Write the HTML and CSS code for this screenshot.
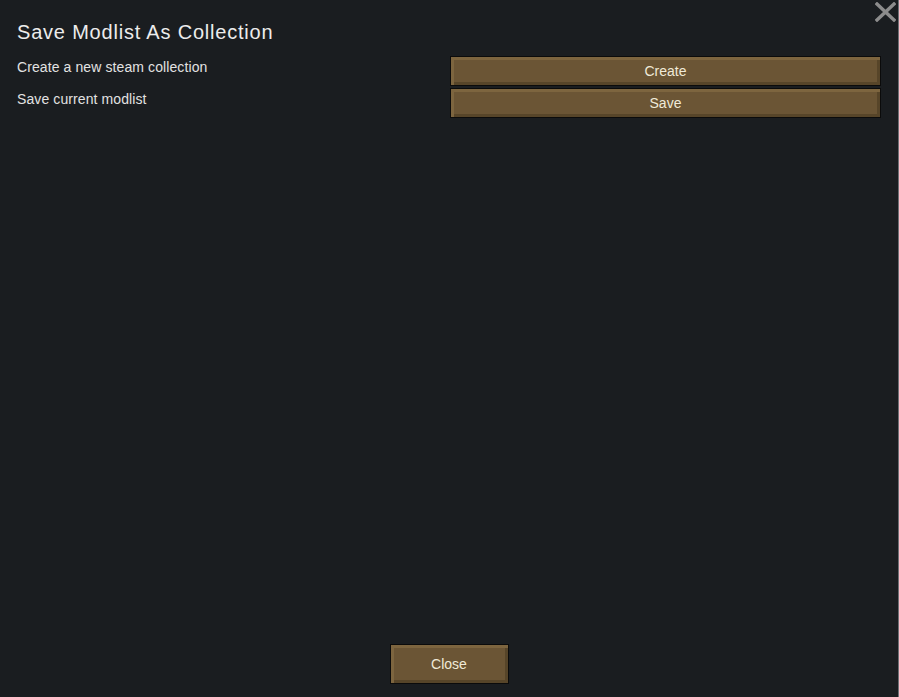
FILE: index.html
```html
<!DOCTYPE html>
<html lang="en">
<head>
    <meta charset="UTF-8">
    <meta name="viewport" content="width=device-width, initial-scale=1.0">
    <title>Save Modlist As Collection</title>
    <link rel="stylesheet" href="styles.css">
</head>
<body>
    <div id="dialog">
        <button class="close-x" title="Close">
            <svg width="21" height="20" viewBox="0 0 21 20">
                <path d="M2 2 L19 18 M19 2 L2 18" stroke="#8c8c8c" stroke-width="3.4" stroke-linecap="square"/>
            </svg>
        </button>
        <h1 class="title">Save Modlist As Collection</h1>
        <div class="rows">
            <div class="row">
                <span class="label">Create a new steam collection</span>
                <button class="btn wide">Create</button>
            </div>
            <div class="row">
                <span class="label">Save current modlist</span>
                <button class="btn wide">Save</button>
            </div>
        </div>
        <div class="footer">
            <button class="btn close">Close</button>
        </div>
    </div>
</body>
</html>
```

FILE: styles.css
```css
*{
    margin: 0;
    padding: 0;
    box-sizing: border-box;
}
html, body{
    width: 100%;
    height: 100%;
    background-color: #1a1d20;
    overflow: hidden;
}
#dialog{
    position: relative;
    height: 697px;
    display: flex;
    flex-direction: column;
    padding: 18px 17px 13px 17px;
    border-right: 1px solid #6d7075;
    font-family: "Liberation Sans", Arial, sans-serif;
    color: #e6e6e6;
}
.close-x{
    position: absolute;
    top: 2px;
    right: 2px;
    width: 21px;
    height: 20px;
    border: none;
    background: none;
}
.title{
    font-size: 20px;
    font-weight: normal;
    line-height: 28px;
    letter-spacing: 0.8px;
    color: #ececec;
}
.rows{
    display: flex;
    flex-direction: column;
    gap: 3px;
    margin-top: 11px;
    flex: 1;
}
.row{
    display: flex;
    justify-content: space-between;
    align-items: flex-start;
    height: 29px;
}
.label{
    font-size: 14px;
    line-height: 18px;
    margin-top: 1px;
    letter-spacing: 0.1px;
    color: #e2e2e2;
}
.btn{
    font-family: "Liberation Sans", Arial, sans-serif;
    font-size: 14px;
    color: #f0ead8;
    background-color: #6b5535;
    border: 1px solid #0b0b0b;
    box-shadow: inset 3px 3px 0 #7d653f, inset -3px -3px 0 #574529;
}
.wide{
    width: 431px;
    height: 30px;
    margin-top: -1px;
}
.footer{
    display: flex;
    justify-content: center;
}
.close{
    width: 119px;
    height: 40px;
}
```
